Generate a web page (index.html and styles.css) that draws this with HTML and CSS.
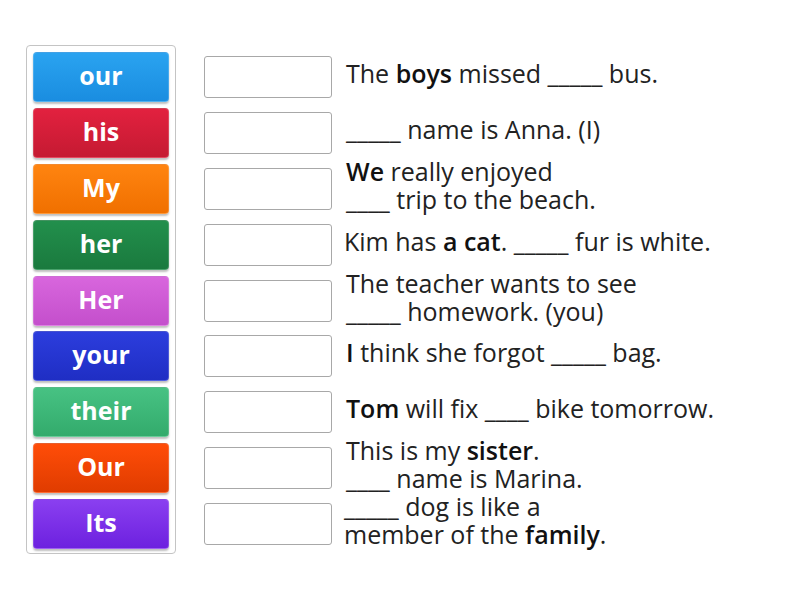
FILE: index.html
```html
<!DOCTYPE html>
<html lang="en">
<head>
    <meta charset="UTF-8">
    <title>Match up - Possessive adjectives</title>
    <link rel="stylesheet" href="styles.css">
</head>
<body>
    <div class="game">
        <!-- Word tiles -->
        <div class="tiles">
            <div class="tile blue">our</div>
            <div class="tile red">his</div>
            <div class="tile orange">My</div>
            <div class="tile green">her</div>
            <div class="tile pink">Her</div>
            <div class="tile navy">your</div>
            <div class="tile mint">their</div>
            <div class="tile flame">Our</div>
            <div class="tile purple">Its</div>
        </div>

        <!-- Sentences with drop boxes -->
        <div class="rows">
            <div class="row">
                <div class="drop"></div>
                <p class="sentence">The <b>boys</b> missed _____ bus.</p>
            </div>
            <div class="row">
                <div class="drop"></div>
                <p class="sentence">_____ name is Anna. (I)</p>
            </div>
            <div class="row">
                <div class="drop"></div>
                <p class="sentence"><b>We</b> really enjoyed<br>____ trip to the beach.</p>
            </div>
            <div class="row">
                <div class="drop"></div>
                <p class="sentence tight">Kim has <b>a cat</b>. _____ fur is white.</p>
            </div>
            <div class="row">
                <div class="drop"></div>
                <p class="sentence">The teacher wants to see<br>_____ homework. (you)</p>
            </div>
            <div class="row">
                <div class="drop"></div>
                <p class="sentence"><b>I</b> think she forgot _____ bag.</p>
            </div>
            <div class="row">
                <div class="drop"></div>
                <p class="sentence"><b>Tom</b> will fix ____ bike tomorrow.</p>
            </div>
            <div class="row">
                <div class="drop"></div>
                <p class="sentence">This is my <b>sister</b>.<br>____ name is Marina.</p>
            </div>
            <div class="row">
                <div class="drop"></div>
                <p class="sentence tight">_____ dog is like a<br>member of the <b>family</b>.</p>
            </div>
        </div>
    </div>
</body>
</html>
```

FILE: styles.css
```css
* {
    margin: 0;
    padding: 0;
    box-sizing: border-box;
    font-family: 'Open Sans', sans-serif;
}

body {
    background: white;
}

.game {
    display: flex;
    align-items: flex-start;
    padding: 45px 0 0 26px;
}

.tiles {
    width: 150px;
    border: 1px solid #c4c4c4;
    border-radius: 4px;
    padding: 6px 6px 4px 6px;
    display: flex;
    flex-direction: column;
    gap: 5.9px;
}

.tile {
    height: 50px;
    padding-bottom: 4px;
    border-radius: 4px;
    color: white;
    font-size: 25px;
    font-weight: 700;
    display: flex;
    align-items: center;
    justify-content: center;
    border: 1px solid rgba(255,255,255,0.18);
    box-shadow: 0 2px 2px rgba(0,0,0,0.25);
}

.blue   { background: linear-gradient(#2aa3f0, #1a8de0); }
.red    { background: linear-gradient(#e2213f, #c51a32); }
.orange { background: linear-gradient(#ff8410, #f07000); }
.green  { background: linear-gradient(#228f4c, #1a7a3e); }
.pink   { background: linear-gradient(#d866dd, #c44fcc); }
.navy   { background: linear-gradient(#2c3ddd, #1f2ec4); }
.mint   { background: linear-gradient(#47c283, #33ab6c); }
.flame  { background: linear-gradient(#ff4d08, #e03c00); }
.purple { background: linear-gradient(#8a3ff0, #6d21df); }

.rows {
    margin-left: 28px;
    padding-top: 7px;
    display: flex;
    flex-direction: column;
    gap: 5.9px;
}

.row {
    height: 50px;
    display: flex;
    align-items: center;
}

.drop {
    width: 128px;
    height: 42px;
    border: 1px solid #a8a8a8;
    border-radius: 3px;
    flex-shrink: 0;
}

.sentence {
    margin: 0 0 8px 14px;
    font-size: 25px;
    line-height: 28px;
    color: #222;
    white-space: nowrap;
}

.sentence b {
    font-weight: 600;
    color: #111;
}

.tight {
    margin-left: 12px;
}
```
